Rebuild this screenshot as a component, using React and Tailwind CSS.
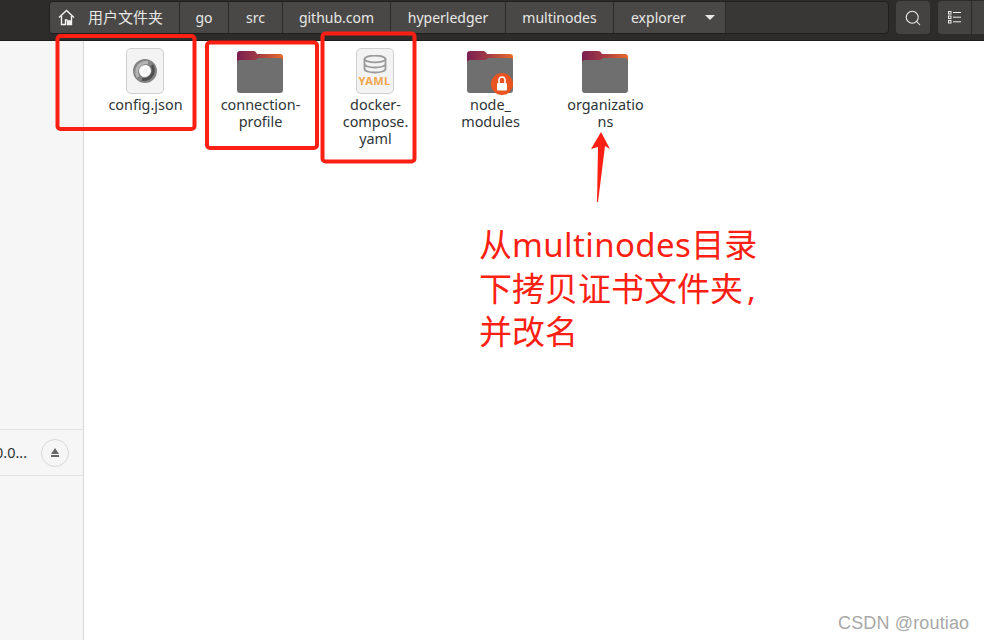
import React from "react";
import { Search } from "lucide-react";

const crumbs = [
  { label: "go", width: "w-[49px]" },
  { label: "src", width: "w-[54px]" },
  { label: "github.com", width: "w-[108px]" },
  { label: "hyperledger", width: "w-[115px]" },
  { label: "multinodes", width: "w-[108px]" },
];

function HomeIcon() {
  return (
    <svg width="17" height="17" viewBox="0 0 17 17" fill="none" stroke="#f2f2f2" strokeWidth="1.400">
      <path d="M1 8.500 8.500 1.500 16 8.500" />
      <path d="M3.500 7v8.500h4V11h2" />
      <path d="M13.500 7v8.500h-4V12h4" fill="#f2f2f2" />
    </svg>
  );
}

function ListIcon() {
  return (
    <svg width="13" height="13" viewBox="0 0 13 13" fill="none" stroke="#eeeeec" strokeWidth="1">
      <rect x="0.500" y="0.500" width="2.500" height="2.500" />
      <rect x="0.500" y="5" width="2.500" height="2.500" />
      <rect x="0.500" y="9.500" width="2.500" height="2.500" />
      <path d="M5 1.500h8M5 6.200h8M5 10.800h8" />
    </svg>
  );
}

function Folder({ id, locked }) {
  return (
    <svg width="46" height="42" viewBox="0 0 46 42" className="overflow-visible mb-[1px]">
      <defs>
        <linearGradient id={id} x1="0" x2="1" y1="0" y2="0">
          <stop offset="0" stopColor="#7a1f52" />
          <stop offset="0.45" stopColor="#a23a45" />
          <stop offset="1" stopColor="#ea6a2c" />
        </linearGradient>
      </defs>
      <path d="M0 3a3 3 0 0 1 3-3h13c2 0 3 1 4 3h23a3 3 0 0 1 3 3v12H0z" fill={`url(#${id})`} />
      <path d="M0 12a3 3 0 0 1 3-3h14c2 0 3-1 4-2h22a3 3 0 0 1 3 3v29a3 3 0 0 1-3 3H3a3 3 0 0 1-3-3z" fill="#6f6f6f" />
      {locked && (
        <g>
          <circle cx="35" cy="33" r="11" fill="#e95420" />
          <rect x="30" y="32" width="10" height="7.500" rx="1" fill="#fff" />
          <path d="M32 32v-3a3 3 0 0 1 6 0v3" fill="none" stroke="#fff" strokeWidth="1.600" />
        </g>
      )}
    </svg>
  );
}

function FileTile({ children }) {
  return (
    <div className="w-[38px] h-[46px] rounded-[5px] border border-[#d0d0d0] bg-[#f3f3f3] flex flex-col items-center justify-center">
      {children}
    </div>
  );
}

function JsonIcon() {
  return (
    <FileTile>
      <svg width="26" height="26" viewBox="0 0 26 26">
        <circle cx="13" cy="13" r="9" fill="none" stroke="#858585" strokeWidth="6" />
        <path d="M6 19C2 11 8 3.500 16 4.500" fill="none" stroke="#b5b5b5" strokeWidth="3" />
        <path d="M20 7c4 8-2 15.500-10 14.500" fill="none" stroke="#4f4f4f" strokeWidth="3" />
        <path d="M10 17.500c-2.500-4.500 1-9 5.500-9.500M16 8.500c2.500 4.500-1 9-5.500 9.500" fill="none" stroke="#fff" strokeWidth="1.800" />
      </svg>
    </FileTile>
  );
}

function YamlIcon() {
  return (
    <FileTile>
      <svg width="24" height="19" viewBox="0 0 24 19">
        <ellipse cx="12" cy="4" rx="10.500" ry="3.400" fill="none" stroke="#9a9a9a" strokeWidth="1.800" />
        <path d="M1.500 4v10c0 2 4.700 3.500 10.500 3.500S22.500 16 22.500 14V4M1.500 9c0 2 4.700 3.500 10.500 3.500S22.500 11 22.500 9" fill="none" stroke="#9a9a9a" strokeWidth="1.800" />
      </svg>
      <span className="mt-[1px] text-[11px] leading-[12px] font-bold tracking-[0.4px] text-[#f0a64a] font-['Noto_Sans',sans-serif]">YAML</span>
    </FileTile>
  );
}

function Item({ icon, lines }) {
  return (
    <div className="w-[115px] flex flex-col items-center">
      <div className="h-[46px] flex items-end">{icon}</div>
      <div className="mt-[2px] pl-[2px] text-center text-[14.400px] leading-[17px] text-[#2e3436]">
        {lines.map((line) => (
          <div key={line}>{line}</div>
        ))}
      </div>
    </div>
  );
}

export default function App() {
  return (
    <div className="relative w-[984px] h-[640px] overflow-hidden bg-white flex flex-col font-['Noto_Sans','Noto_Sans_CJK_SC',sans-serif]">
      {/* header bar */}
      <div className="h-[41px] shrink-0 bg-[#2d2c2b] border-b border-[#1d1c1b] flex items-start pl-[49px] pt-[1px]">
        <div className="w-[840px] h-[33px] flex rounded-[4px] bg-[#383735] border border-[#201f1e] overflow-hidden text-[14px] text-[#e8e8e6]">
          <div className="w-[130px] flex items-center bg-[#4a4846] border-r border-[#2b2a29] pl-[8px] shrink-0">
            <HomeIcon />
            <span className="ml-[13px] whitespace-nowrap text-[15px]">用户文件夹</span>
          </div>
          {crumbs.map((c) => (
            <div key={c.label} className={`${c.width} shrink-0 flex items-center justify-center bg-[#4a4846] border-r border-[#2b2a29]`}>
              {c.label}
            </div>
          ))}
          <div className="w-[112px] shrink-0 flex items-center bg-[#4a4846] border-r border-[#2b2a29] pl-[17px]">
            explorer
            <span className="ml-[19px] w-0 h-0 border-x-[5px] border-x-transparent border-t-[5px] border-t-[#e8e8e6]" />
          </div>
        </div>
        <div className="ml-[7px] w-[34px] h-[33px] rounded-[4px] bg-[#454341] flex items-center justify-center">
          <Search size={18} strokeWidth={1.400} color="#eeeeec" />
        </div>
        <div className="ml-[8px] w-[34px] h-[33px] rounded-l-[4px] bg-[#454341] border-r border-[#2b2a29] flex items-center justify-center">
          <ListIcon />
        </div>
        <div className="w-[12px] h-[33px] bg-[#454341]" />
      </div>

      <div className="flex-1 flex min-h-0">
        {/* sidebar */}
        <div className="w-[84px] shrink-0 bg-[#f6f6f6] border-r border-[#d8d8d8] pt-[388px]">
          <div className="h-[47px] border-y border-[#e2e2e2] flex items-center justify-end pr-[14px] overflow-hidden">
            <span className="whitespace-nowrap text-[14.400px] text-[#2e3436] mr-[14px]">0.0...</span>
            <span className="shrink-0 w-[28px] h-[28px] rounded-full border border-[#d8d8d8] flex flex-col items-center justify-center">
              <span className="w-0 h-0 border-x-[4px] border-x-transparent border-b-[6px] border-b-[#666]" />
              <span className="mt-[1px] w-[8px] h-[2px] bg-[#666]" />
            </span>
          </div>
        </div>

        {/* file grid */}
        <div className="flex-1 flex items-start pl-[3px] pt-[7px]">
          <Item icon={<JsonIcon />} lines={["config.json"]} />
          <Item icon={<Folder id="f1" />} lines={["connection-", "profile"]} />
          <Item icon={<YamlIcon />} lines={["docker-", "compose.", "yaml"]} />
          <Item icon={<Folder id="f2" locked />} lines={["node_", "modules"]} />
          <Item icon={<Folder id="f3" />} lines={["organizatio", "ns"]} />
        </div>
      </div>

      {/* red annotations drawn over the screenshot */}
      <svg className="absolute left-0 top-0 pointer-events-none" width="984" height="640" viewBox="0 0 984 640">
        <g fill="none" stroke="#fb1f14" strokeWidth="4">
          <rect x="57.500" y="36" width="137" height="93" rx="3" />
          <rect x="207" y="42.500" width="110" height="105.500" rx="3" />
          <rect x="322.500" y="33.500" width="92" height="128" rx="3" />
        </g>
        <path d="M601 132l9 17-5-3-7 56-1 0 1-55-7 2z" fill="#fb1f14" />
      </svg>
      <div className="absolute left-[479px] top-[223px] text-[33px] leading-[43.500px] text-[#fb1f14] font-['Noto_Sans','Noto_Sans_CJK_SC',sans-serif]">
        <div>从<span className="tracking-[0.4px]">multinodes</span>目录</div>
        <div>下拷贝证书文件夹<span className="ml-[4px]">,</span></div>
        <div>并改名</div>
      </div>
      <div className="absolute left-[838px] top-[613px] text-[18px] leading-[21px] tracking-[0.150px] text-[#a8a8a8] font-['Liberation_Sans',sans-serif]">
        CSDN @routiao
      </div>
    </div>
  );
}
